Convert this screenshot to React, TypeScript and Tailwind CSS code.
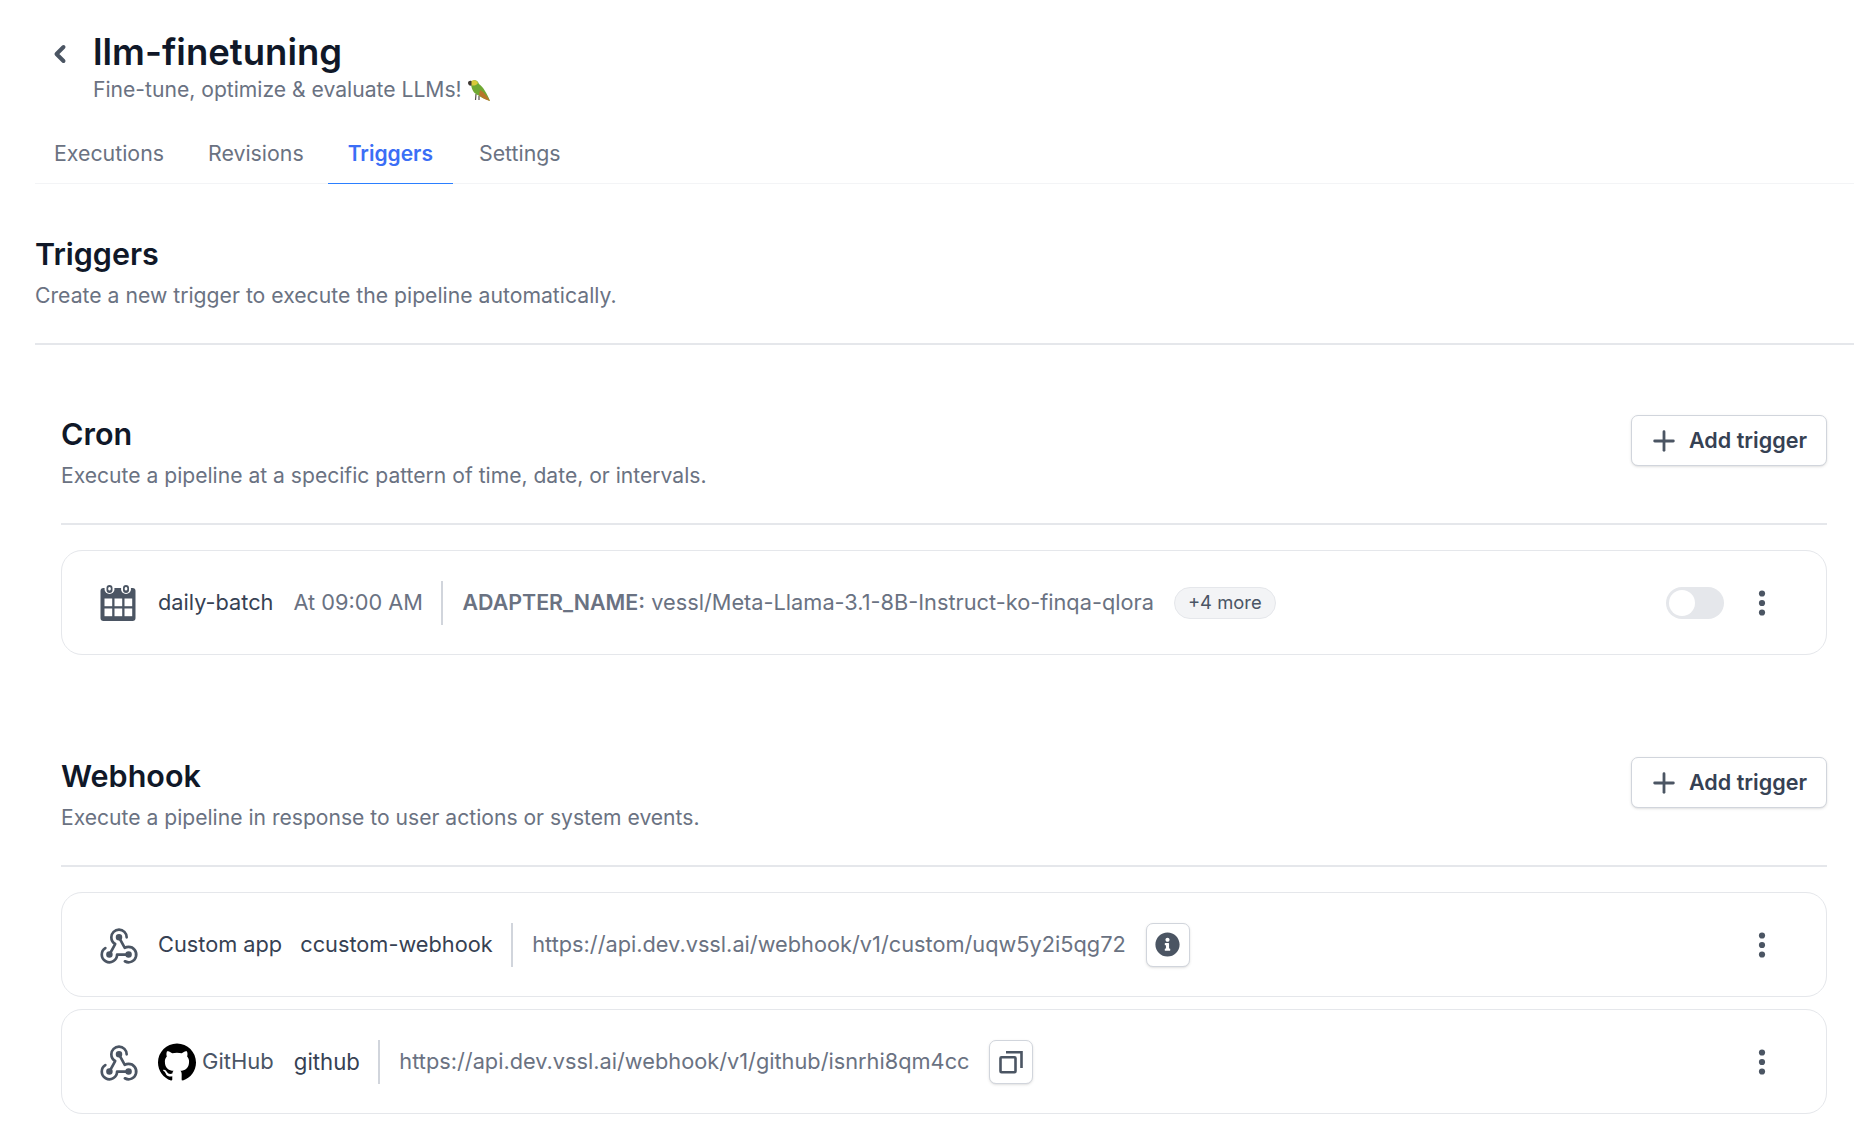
import { ChevronLeft, Plus } from "lucide-react";
import { FaInfoCircle } from "react-icons/fa";
import { SiGithub } from "react-icons/si";

const tabs = ["Executions", "Revisions", "Triggers", "Settings"];

function ParrotIcon() {
  return (
    <svg viewBox="0 0 24 23" className="w-[24px] h-[23px] ml-[4px] shrink-0">
      <path d="M5 3 C8 0 12 1 13 5 C17 8 21 14 24 22 C19 20 14 18 10 15 C7 13 5 9 5 3 Z" fill="#6fa832" />
      <path d="M14 11 C18 13 21 17 24 22 C20 21 16 19 13 16 Z" fill="#b8752c" />
      <path d="M4 3 C7 0 11 1 12 4 C10 7 7 7 5 6 Z" fill="#d9c93a" />
      <path d="M2 4 C2 2 4 1.500 5.500 2 L5.500 6.500 C4 7 2 6 2 4 Z" fill="#3f3a35" />
      <path d="M10 15 L9.500 21 M13 17 L13 21" stroke="#55504a" strokeWidth="1.200" />
    </svg>
  );
}

function CalendarIcon() {
  return (
    <svg viewBox="0 0 35 36" className="w-[36px] h-[36px] shrink-0 text-[#4b5563]" fill="currentColor">
      <rect x="0" y="3" width="35" height="33" rx="3" />
      <circle cx="9" cy="4" r="5" fill="#fff" />
      <circle cx="25.500" cy="4" r="5" fill="#fff" />
      <rect x="6" y="0" width="6" height="8" rx="3" />
      <rect x="22.500" y="0" width="6" height="8" rx="3" />
      <rect x="7.800" y="2" width="2.400" height="3.500" rx="1.200" fill="#fff" />
      <rect x="24.300" y="2" width="2.400" height="3.500" rx="1.200" fill="#fff" />
      <g fill="#fff">
        <rect x="4" y="13.500" width="7.700" height="7.700" />
        <rect x="14" y="13.500" width="7.700" height="7.700" />
        <rect x="24" y="13.500" width="7.700" height="7.700" />
        <rect x="4" y="23.500" width="7.700" height="7.700" />
        <rect x="14" y="23.500" width="7.700" height="7.700" />
        <rect x="24" y="23.500" width="7.700" height="7.700" />
      </g>
    </svg>
  );
}

function WebhookIcon() {
  return (
    <svg
      viewBox="0 0 24 24"
      className="w-[46px] h-[46px] -ml-[4px] -mr-[6px] shrink-0 text-[#4b5563]"
      fill="none"
      stroke="currentColor"
      strokeWidth="1.400"
      strokeLinecap="round"
      strokeLinejoin="round"
    >
      <path d="M4.876 13.61a4 4 0 1 0 6.124 3.39h6" />
      <path d="M15.066 20.502a4 4 0 1 0 1.934 -7.502c-.706 0 -1.424 .179 -2 .5l-3 -5.500" />
      <path d="M16 8a4 4 0 1 0 -8 0c0 1.506 .77 2.818 2 3.500l-3 5.500" />
      <circle cx="12" cy="8" r="1" fill="currentColor" />
      <circle cx="7" cy="17" r="1" fill="currentColor" />
      <circle cx="17" cy="17" r="1" fill="currentColor" />
    </svg>
  );
}

function CopyIcon() {
  return (
    <svg viewBox="0 0 24 24" className="w-[24px] h-[24px]" fill="none" stroke="#4b5563" strokeWidth="2.600">
      <rect x="1.500" y="7.300" width="15" height="15" rx="1" />
      <path d="M7 2.300 H22.500 V18" />
    </svg>
  );
}

function MenuDots() {
  return (
    <svg viewBox="0 0 32 32" className="w-[32px] h-[32px] shrink-0" fill="#4b5563">
      <circle cx="16" cy="6.500" r="3.100" />
      <circle cx="16" cy="16" r="3.100" />
      <circle cx="16" cy="25.500" r="3.100" />
    </svg>
  );
}

function AddButton() {
  return (
    <button className="flex items-center w-[196px] h-[51px] mt-[1px] pl-[16px] gap-[9px] rounded-[7px] border border-gray-300 bg-white shadow-sm text-[21.55px] font-semibold text-gray-700">
      <Plus size={32} strokeWidth={2.1} className="text-[#4b5563]" />
      Add trigger
    </button>
  );
}

function SectionHeader({ title, desc }: { title: string; desc: string }) {
  return (
    <div className="flex items-start justify-between border-b-2 border-gray-200 pb-[31px]">
      <div>
        <h2 className="text-[30.5px] leading-[40px] font-semibold text-gray-900">{title}</h2>
        <p className="mt-[6px] text-[21.1px] leading-[32px] text-gray-500">{desc}</p>
      </div>
      <AddButton />
    </div>
  );
}

function Divider() {
  return <div className="w-[2px] self-center -ml-[2px] -mr-[0.5px] bg-gray-300 h-[44px] shrink-0" />;
}

function Card({ children, right }: { children: React.ReactNode; right: React.ReactNode }) {
  return (
    <div className="flex items-center justify-between h-[105px] pl-[38px] pr-[48px] rounded-[21px] border border-gray-200 bg-white">
      <div className="flex items-center gap-[20px] text-[21.76px] whitespace-nowrap">{children}</div>
      <div className="flex items-center gap-[22px]">
        {right}
        <MenuDots />
      </div>
    </div>
  );
}

export default function App() {
  return (
    <div className="w-[1854px] h-[1146px] overflow-hidden bg-white pl-[35px] pt-[24px] font-['Inter',sans-serif]">
      {/* Title */}
      <div className="flex items-start pl-[11px]">
        <ChevronLeft size={28} strokeWidth={3.4} className="mt-[16px] text-[#4b5563] shrink-0" />
        <div className="ml-[19px]">
          <h1 className="text-[36.5px] leading-[56px] font-semibold text-gray-900">llm-finetuning</h1>
          <div className="flex items-center h-[32px] -mt-[6px] text-[21.12px] text-gray-500">
            Fine-tune, optimize &amp; evaluate LLMs!
            <ParrotIcon />
          </div>
        </div>
      </div>

      {/* Tabs */}
      <div className="mt-[24px] h-[54px] border-b border-gray-100">
        <div className="flex gap-[4px] -ml-[1px]">
          {tabs.map((tab) => (
            <div
              key={tab}
              className={
                tab === "Triggers"
                  ? "flex items-center px-[20px] pb-[6px] h-[54px] border-b-[1.5px] border-blue-500 text-[21px] font-semibold text-[#3b6ef6]"
                  : "flex items-center px-[20px] pb-[6px] h-[54px] text-[21.33px] text-gray-500 last:ml-[2px]"
              }
            >
              {tab}
            </div>
          ))}
        </div>
      </div>

      {/* Page heading */}
      <div className="mt-[50px] border-b-2 border-gray-200 pb-[32px]">
        <h2 className="text-[30.5px] leading-[40px] font-semibold text-gray-900">Triggers</h2>
        <p className="mt-[5px] text-[21.2px] leading-[32px] text-gray-500">
          Create a new trigger to execute the pipeline automatically.
        </p>
      </div>

      <div className="pl-[26px] pr-[27px]">
        {/* Cron */}
        <section className="mt-[69px]">
          <SectionHeader title="Cron" desc="Execute a pipeline at a specific pattern of time, date, or intervals." />
          <div className="mt-[25px]">
            <Card
              right={
                <div className="flex items-center w-[58px] h-[32px] rounded-full bg-gray-200 pl-[3px]">
                  <div className="w-[26px] h-[26px] rounded-full bg-white" />
                </div>
              }
            >
              <CalendarIcon />
              <span className="ml-[2px] text-gray-700">daily-batch</span>
              <span className="text-gray-500">At 09:00 AM</span>
              <Divider />
              <span className="text-gray-500">
                <span className="text-[21.4px] font-semibold">ADAPTER_NAME:</span> vessl/Meta-Llama-3.1-8B-Instruct-ko-finqa-qlora
              </span>
              <span className="flex items-center h-[32px] px-[13px] rounded-full border border-gray-200 bg-gray-100 text-[18.4px] text-gray-600">
                +4 more
              </span>
            </Card>
          </div>
        </section>

        {/* Webhook */}
        <section className="mt-[101px]">
          <SectionHeader title="Webhook" desc="Execute a pipeline in response to user actions or system events." />
          <div className="mt-[25px] flex flex-col gap-[12px]">
            <Card right={null}>
              <WebhookIcon />
              <span className="ml-[2px] -mr-[2px] text-gray-700">Custom app</span>
              <span className="text-gray-700">ccustom-webhook</span>
              <Divider />
              <span className="text-gray-500">https://api.dev.vssl.ai/webhook/v1/custom/uqw5y2i5qg72</span>
              <button className="flex items-center justify-center w-[44px] h-[44px] rounded-[7px] border border-gray-300 bg-white shadow-sm">
                <FaInfoCircle size={25} className="text-[#4b5563]" />
              </button>
            </Card>
            <Card right={null}>
              <WebhookIcon />
              <span className="ml-[2px] -mr-[14px]">
                <SiGithub size={38} className="text-black" />
              </span>
              <span className="text-[22px] text-gray-600">GitHub</span>
              <span className="text-[22.2px] text-gray-700">github</span>
              <Divider />
              <span className="text-gray-500">https://api.dev.vssl.ai/webhook/v1/github/isnrhi8qm4cc</span>
              <button className="flex items-center justify-center w-[44px] h-[44px] rounded-[7px] border border-gray-300 bg-white shadow-sm">
                <CopyIcon />
              </button>
            </Card>
          </div>
        </section>
      </div>
    </div>
  );
}
